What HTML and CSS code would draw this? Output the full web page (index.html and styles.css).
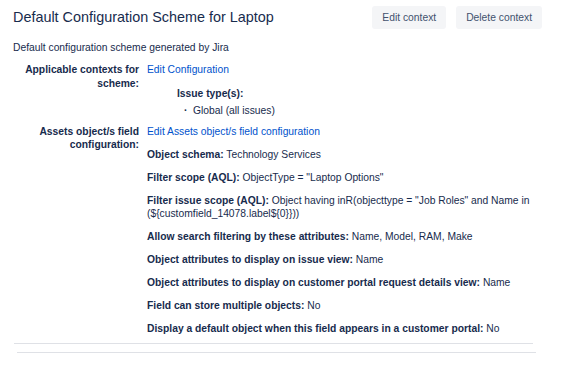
FILE: index.html
```html
<!DOCTYPE html>
<html lang="en">
<head>
    <meta charset="UTF-8">
    <meta name="viewport" content="width=device-width, initial-scale=1.0">
    <title>Default Configuration Scheme for Laptop</title>
    <link rel="stylesheet" href="styles.css">
</head>
<body>
    <div class="page">
        <header class="page-header">
            <h1>Default Configuration Scheme for Laptop</h1>
            <div class="actions">
                <button class="btn">Edit context</button>
                <button class="btn">Delete context</button>
            </div>
        </header>

        <p class="description">Default configuration scheme generated by Jira</p>

        <dl class="config">
            <dt>Applicable contexts for scheme:</dt>
            <dd>
                <a href="#">Edit Configuration</a>
                <div class="issue-types">
                    <strong>Issue type(s):</strong>
                    <ul>
                        <li>Global (all issues)</li>
                    </ul>
                </div>
            </dd>

            <dt>Assets object/s field configuration:</dt>
            <dd>
                <a href="#">Edit Assets object/s field configuration</a>
                <p><strong>Object schema:</strong> Technology Services</p>
                <p><strong>Filter scope (AQL):</strong> ObjectType = "Laptop Options"</p>
                <p><strong>Filter issue scope (AQL):</strong> Object having inR(objecttype = "Job Roles" and Name in (${customfield_14078.label${0}}))</p>
                <p><strong>Allow search filtering by these attributes:</strong> Name, Model, RAM, Make</p>
                <p><strong>Object attributes to display on issue view:</strong> Name</p>
                <p><strong>Object attributes to display on customer portal request details view:</strong> Name</p>
                <p><strong>Field can store multiple objects:</strong> No</p>
                <p><strong>Display a default object when this field appears in a customer portal:</strong> No</p>
            </dd>
        </dl>

        <hr class="divider">
        <hr class="divider divider-second">
    </div>
</body>
</html>
```

FILE: styles.css
```css
* {
    margin: 0;
    padding: 0;
    box-sizing: border-box;
}

body {
    background-color: #fff;
    color: #172b4d;
    font-family: 'Liberation Sans', Arial, sans-serif;
    font-size: 10.3px;
    line-height: 13.4px;
}

.page {
    width: 584px;
    padding: 6px 0 0 13px;
}

.page-header {
    display: flex;
    align-items: flex-start;
    justify-content: space-between;
    padding-right: 42px;
}

h1 {
    font-size: 14.4px;
    font-weight: normal;
    line-height: 23px;
}

.actions {
    display: flex;
    gap: 10px;
}

.btn {
    background-color: #f4f5f7;
    color: #42526e;
    border: none;
    border-radius: 3px;
    height: 23px;
    padding: 0 10px;
    font-family: inherit;
    font-size: 10.3px;
    cursor: pointer;
}

.description {
    margin-top: 12.3px;
}

.config {
    display: grid;
    grid-template-columns: 126px 1fr;
    column-gap: 8px;
    row-gap: 7.6px;
    margin-top: 8.6px;
    padding-right: 30px;
}

.config dt {
    text-align: right;
    font-weight: bold;
}

.config a {
    color: #0052cc;
    text-decoration: none;
}

.issue-types {
    margin: 10px 0 0 30px;
}

.issue-types ul {
    list-style: none;
    margin-top: 3.4px;
    padding-left: 7px;
}

.issue-types li::before {
    content: "\00b7";
    display: inline-block;
    width: 9px;
    font-weight: bold;
}

.config p {
    margin-top: 9.6px;
}

.divider {
    border: none;
    border-top: 1px solid #dfe1e6;
    width: 519px;
    margin: 8px 0 0 1px;
}

.divider-second {
    margin: 8px 0 0 4px;
}
```
